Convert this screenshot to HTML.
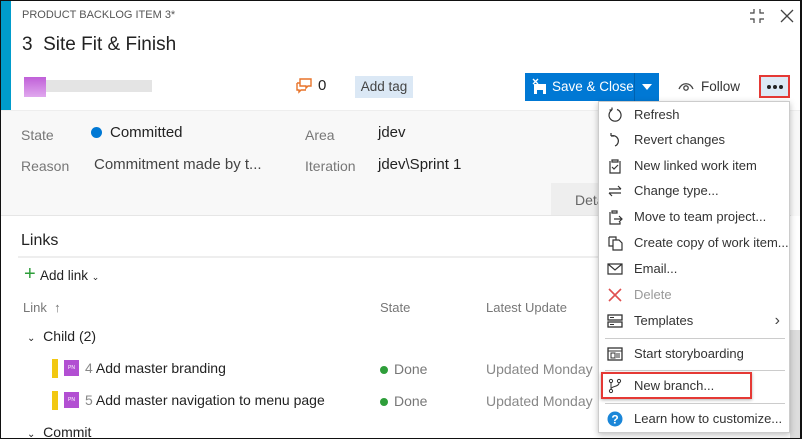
<!DOCTYPE html>
<html><head><meta charset="utf-8"><style>
*{box-sizing:border-box;margin:0;padding:0}
body{width:802px;height:439px;overflow:hidden;background:#fff;font-family:"Segoe UI","Liberation Sans",sans-serif;color:#222;position:relative}
.a{position:absolute;white-space:nowrap}
.frame{position:absolute;left:0;top:0;width:802px;height:439px;border:1px solid #111;border-right-width:2px;pointer-events:none}
.lbl{color:#777;font-size:14px}
.mi{position:absolute;left:0;width:191px;height:26px;font-size:13px;color:#333;line-height:26px;padding-left:35px}
.mi svg{position:absolute;left:8px;top:5px}
.sep{position:absolute;left:6px;width:180px;height:1px;background:#ccc}
</style></head><body>
<div class="a" style="left:1px;top:1px;width:10px;height:109px;background:#009ccc"></div>
<div class="a" style="left:22px;top:9px;font-size:11px;color:#555">PRODUCT BACKLOG ITEM 3*</div>
<div class="a" style="left:22px;top:34px;font-size:19px;color:#222">3&nbsp;&nbsp;Site Fit &amp; Finish</div>
<div class="a" style="left:24px;top:77px;width:22px;height:20px;background:linear-gradient(#c060d8,#e0a8ee)"></div>
<div class="a" style="left:46px;top:80px;width:106px;height:12px;background:#ddd;opacity:.8"></div>
<svg class="a" style="left:295px;top:78px" width="18" height="16" viewBox="0 0 18 16"><path d="M5 1h11v7h-3l-2 2V8H5z M2 5h3 M2 5v7h2v2l2-2h5" fill="none" stroke="#e8742a" stroke-width="1.4"/></svg>
<div class="a" style="left:318px;top:77px;font-size:15px">0</div>
<div class="a" style="left:355px;top:76px;width:58px;height:22px;background:#dbe8f5;font-size:13.5px;line-height:22px;text-align:center;color:#444">Add tag</div>
<div class="a" style="left:525px;top:73px;width:134px;height:28px;background:#0078d4"></div>
<div class="a" style="left:634px;top:73px;width:1px;height:28px;background:#0062b0"></div>
<svg class="a" style="left:532px;top:78px" width="16" height="18" viewBox="0 0 16 18"><rect x="2" y="6" width="12" height="10" fill="#fff"/><rect x="5" y="12" width="6" height="4" fill="#0078d4"/><path d="M1 1l5 5M6 1L1 6" stroke="#fff" stroke-width="1.4"/></svg>
<div class="a" style="left:552px;top:79px;font-size:13.5px;color:#fff">Save &amp; Close</div>
<div class="a" style="left:642px;top:84px;border:5px solid transparent;border-top:6px solid #fff;border-bottom:0"></div>
<svg class="a" style="left:678px;top:80px" width="16" height="12" viewBox="0 0 16 12"><path d="M1 9C4 2 12 2 15 9" fill="none" stroke="#444" stroke-width="1.3"/><circle cx="8" cy="8" r="2.2" fill="none" stroke="#444" stroke-width="1.3"/></svg>
<div class="a" style="left:701px;top:79px;font-size:13.5px;color:#333">Follow</div>
<div class="a" style="left:759px;top:75px;width:31px;height:23px;border:2px solid #e53935;background:#dde9f5"></div>
<div class="a" style="left:767px;top:85px;width:4px;height:4px;border-radius:50%;background:#222;box-shadow:6px 0 #222,12px 0 #222"></div>
<svg class="a" style="left:749px;top:8px" width="16" height="16" viewBox="0 0 16 16"><path d="M5 1v4H1M11 1v4h4M1 11h4v4M15 11h-4v4" fill="none" stroke="#444" stroke-width="1.2"/></svg>
<svg class="a" style="left:780px;top:9px" width="14" height="14" viewBox="0 0 14 14"><path d="M1 1l12 12M13 1L1 13" stroke="#444" stroke-width="1.3"/></svg>
<div class="a" style="left:1px;top:110px;width:799px;height:106px;background:#f8f8f8;border-top:1px solid #eee"></div>
<div class="a lbl" style="left:21px;top:127px">State</div>
<div class="a" style="left:91px;top:127px;width:11px;height:11px;border-radius:50%;background:#0078d4"></div>
<div class="a" style="left:110px;top:124px;font-size:15px">Committed</div>
<div class="a lbl" style="left:21px;top:158px">Reason</div>
<div class="a" style="left:94px;top:156px;font-size:15px;color:#444">Commitment made by t...</div>
<div class="a lbl" style="left:305px;top:127px">Area</div>
<div class="a" style="left:378px;top:124px;font-size:15px">jdev</div>
<div class="a lbl" style="left:305px;top:158px">Iteration</div>
<div class="a" style="left:378px;top:156px;font-size:15px">jdev\Sprint 1</div>
<div class="a" style="left:551px;top:183px;width:50px;height:33px;background:#eee;font-size:14px;color:#666;padding:9px 0 0 24px">Deta</div>
<div class="a" style="left:1px;top:215px;width:790px;height:1px;background:#e6e6e6"></div>
<div class="a" style="left:21px;top:232px;font-size:16px">Links</div>
<div class="a" style="left:18px;top:256px;width:580px;height:2px;background:#eee"></div>
<div class="a" style="left:24px;top:264px;font-size:20px;color:#2e9e3a;line-height:20px">+</div>
<div class="a" style="left:40px;top:268px;font-size:13.5px">Add link <span style="font-size:9px">&#8964;</span></div>
<div class="a lbl" style="left:23px;top:300px;font-size:13px">Link&nbsp; ↑</div>
<div class="a lbl" style="left:380px;top:300px;font-size:13px">State</div>
<div class="a lbl" style="left:486px;top:300px;font-size:13px">Latest Update</div>
<div class="a" style="left:27px;top:328px;font-size:14px"><span style="font-size:10px">&#8964;</span>&nbsp; Child (2)</div>
<div class="a" style="left:52px;top:359px;width:6px;height:19px;background:#f2c811"></div>
<div class="a" style="left:64px;top:360px;width:15px;height:16px;background:#b24fd2;color:#fff;font-size:5px;text-align:center;line-height:16px">PN</div>
<div class="a" style="left:85px;top:360px;font-size:14px"><span style="color:#888">4</span> Add master branding</div>
<div class="a" style="left:52px;top:391px;width:6px;height:19px;background:#f2c811"></div>
<div class="a" style="left:64px;top:392px;width:15px;height:16px;background:#b24fd2;color:#fff;font-size:5px;text-align:center;line-height:16px">PN</div>
<div class="a" style="left:85px;top:392px;font-size:14px"><span style="color:#888">5</span> Add master navigation to menu page</div>
<div class="a" style="left:380px;top:366px;width:8px;height:8px;border-radius:50%;background:#2e9e3a"></div>
<div class="a" style="left:394px;top:361px;font-size:14px;color:#777">Done</div>
<div class="a" style="left:380px;top:398px;width:8px;height:8px;border-radius:50%;background:#2e9e3a"></div>
<div class="a" style="left:394px;top:393px;font-size:14px;color:#777">Done</div>
<div class="a" style="left:486px;top:361px;font-size:14px;color:#888">Updated Monday</div>
<div class="a" style="left:486px;top:393px;font-size:14px;color:#888">Updated Monday</div>
<div class="a" style="left:27px;top:424px;font-size:14px"><span style="font-size:10px">&#8964;</span>&nbsp; Commit</div>
<div class="a" style="left:790px;top:330px;width:10px;height:108px;background:#ddd"></div>

<div class="a" style="left:598px;top:101px;width:192px;height:332px;background:#fff;border:1px solid #ccc;box-shadow:0 2px 6px rgba(0,0,0,.25)">
<div class="mi" style="top:0"><svg width="16" height="16" viewBox="0 0 16 16"><path d="M5 3A6 6 0 1 0 10 2.5M5 3V0.5M5 3H2.5" fill="none" stroke="#333" stroke-width="1.2"/></svg>Refresh</div>
<div class="mi" style="top:25px"><svg width="16" height="16" viewBox="0 0 16 16"><path d="M4 4A5 5 0 1 1 8 14M4 4V1M4 4h3" fill="none" stroke="#333" stroke-width="1.2"/></svg>Revert changes</div>
<div class="mi" style="top:51px"><svg width="16" height="16" viewBox="0 0 16 16"><path d="M5 2h6v2H5zM3 3v12h10V3M5 9l2 2 4-4" fill="none" stroke="#333" stroke-width="1.2"/></svg>New linked work item</div>
<div class="mi" style="top:76px"><svg width="16" height="16" viewBox="0 0 16 16"><path d="M2 6h12M11 3l3 3M14 10H2M5 13l-3-3" fill="none" stroke="#333" stroke-width="1.2"/></svg>Change type...</div>
<div class="mi" style="top:102px"><svg width="16" height="16" viewBox="0 0 16 16"><path d="M5 2h5v2H5zM3 3v12h10v-2M7 10h8M12 7l3 3-3 3" fill="none" stroke="#333" stroke-width="1.2"/></svg>Move to team project...</div>
<div class="mi" style="top:128px"><svg width="16" height="16" viewBox="0 0 16 16"><path d="M2 2h7v3M2 2v9h4M6 5h6l3 3v7H6z" fill="none" stroke="#333" stroke-width="1.2"/></svg>Create copy of work item...</div>
<div class="mi" style="top:154px"><svg width="16" height="16" viewBox="0 0 16 16"><path d="M1 3h14v10H1zM1 3l7 6 7-6" fill="none" stroke="#333" stroke-width="1.2"/></svg>Email...</div>
<div class="mi" style="top:180px;color:#999"><svg width="16" height="16" viewBox="0 0 16 16"><path d="M2 2l12 12M14 2L2 14" stroke="#e05050" stroke-width="1.6"/></svg>Delete</div>
<div class="mi" style="top:206px"><svg width="16" height="16" viewBox="0 0 16 16"><rect x="1" y="2" width="14" height="5" fill="none" stroke="#333" stroke-width="1.3"/><rect x="1" y="9" width="14" height="5" fill="none" stroke="#333" stroke-width="1.3"/><path d="M3 4.5h4M3 11.5h4" stroke="#333"/></svg>Templates<span style="position:absolute;right:10px;font-size:16px;color:#444">›</span></div>
<div class="sep" style="top:236px"></div>
<div class="mi" style="top:239px"><svg width="16" height="16" viewBox="0 0 16 16"><rect x="1" y="2" width="14" height="12" fill="none" stroke="#333" stroke-width="1.3"/><path d="M1 5h14M4 7h4v5H4zM10 7v5M12 7v5" fill="none" stroke="#333"/></svg>Start storyboarding</div>
<div class="sep" style="top:268px"></div>
<div class="a" style="left:2px;top:270px;width:151px;height:27px;border:2px solid #e53935;box-shadow:0 1px 3px rgba(0,0,0,.3)"></div>
<div class="mi" style="top:271px"><svg width="16" height="16" viewBox="0 0 16 16"><circle cx="4" cy="3" r="1.6" fill="none" stroke="#333"/><circle cx="12" cy="3" r="1.6" fill="none" stroke="#333"/><circle cx="4" cy="13" r="1.6" fill="none" stroke="#333"/><path d="M4 5v6M12 5c0 4-8 3-8 6" fill="none" stroke="#333"/></svg>New branch...</div>
<div class="sep" style="top:301px"></div>
<div class="mi" style="top:304px"><svg width="16" height="16" viewBox="0 0 16 16"><circle cx="8" cy="8" r="7.5" fill="#1a86d8"/><text x="8" y="12.5" font-size="12" font-weight="bold" fill="#fff" text-anchor="middle" font-family="Liberation Sans">?</text></svg>Learn how to customize...</div>
</div>
<div class="frame"></div>
</body></html>
